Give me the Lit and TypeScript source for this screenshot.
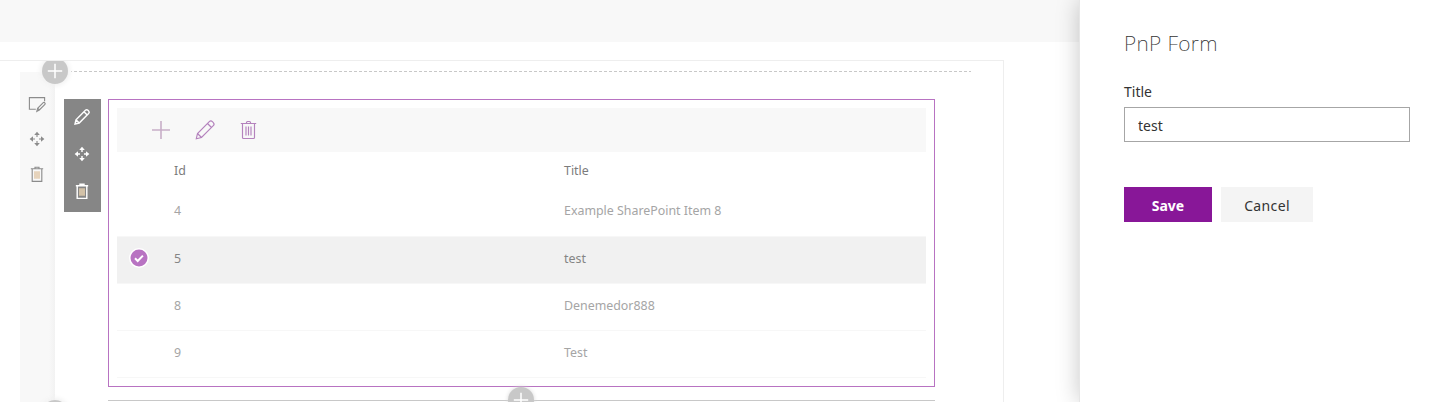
import { LitElement, html, css, svg } from "lit";
import { customElement, property } from "lit/decorators.js";

const glyphs: Record<string, unknown> = {
  add: svg`<path d="M10 1v18M1 10h18"/>`,
  edit: svg`<path d="M1.300 18.700l1.200-5.200L14.300 1.700a2.200 2.200 0 0 1 3.100 0l.9.9a2.200 2.200 0 0 1 0 3.100L6.500 17.500zM2.500 13.500l4 4M12.500 3.500l4 4"/>`,
  trash: svg`<path d="M2.800 3.500h15.400M4.500 3.500v14c0 .6.400 1 1 1h10c.6 0 1-.4 1-1v-14M8.500 3.500v-1c0-.6.400-1 1-1h2c.6 0 1 .4 1 1v1M8 6.500v9M10.500 6.500v9M13 6.500v9"/>`,
  bin: svg`<path d="M2.300 3.500h15.400M4 3.500v15.700h12V3.500M7.500 3.500V1.500h5v2"/><path class="bars" d="M7.500 6.500v9.500M10 6.500v9.500M12.500 6.500v9.500"/>`,
  move: svg`<path d="M10 7.500V3M10 12.500V17M7.500 10H3M12.500 10H17"/><path class="solid" d="M10 .8l3.500 4.200H6.500zM10 19.200l3.500-4.200H6.500zM.8 10l4.200-3.500v7zM19.200 10l-4.200-3.500v7z"/>`,
  section: svg`<path d="M8.500 16.500H.5V2h19v4.500M9.800 19.300l1-4 7-7c1.200-1.200 3.300 1 2.100 2.200l-7 7zM10.800 15.300l2.100 2.200"/>`,
};

@customElement("line-icon")
export class LineIcon extends LitElement {
  @property() name = "add";
  static styles = css`
    :host { display: block; width: 20px; height: 20px; }
    svg { display: block; width: 100%; height: 100%; overflow: visible; fill: none;
      stroke: currentColor; stroke-width: var(--stroke, 1.1); }
    .bars { stroke: var(--bars, currentColor); }
    .solid { fill: currentColor; stroke: none; }
  `;
  render() {
    return html`<svg viewBox="0 0 20 20">${glyphs[this.name]}</svg>`;
  }
}

@customElement("app-root")
export class AppRoot extends LitElement {
  private rows = [
    { id: "4", title: "Example SharePoint Item 8" },
    { id: "5", title: "test", selected: true },
    { id: "8", title: "Denemedor888" },
    { id: "9", title: "Test" },
  ];

  static styles = css`
    :host { display: flex; width: 1432px; height: 402px; overflow: hidden; background: #fff;
      font-family: "Noto Sans", "Open Sans", sans-serif; }
    * { box-sizing: border-box; }
    .page { width: 1079px; height: 402px; overflow: hidden; }
    .topbar { height: 42px; background: #f8f8f8; margin-bottom: 18px; }
    .canvas { position: relative; width: 1004px; height: 342px; overflow: hidden; display: flex;
      padding-left: 20px; border-top: 1px solid #eee; border-right: 1px solid #eee; }
    .rail { width: 35px; margin-top: 11px; padding: 24px 1px 0 0; display: flex; flex-direction: column;
      align-items: center; gap: 19px; color: #8c8c8c; flex: none; --bars: #d8b68c;
      background: linear-gradient(90deg, #f8f8f8 29px, #f2f2f2 35px); }
    .rail line-icon { width: 16px; height: 16px; --stroke: 1.4; }
    .rail line-icon[name="move"], .tools line-icon[name="move"] { width: 16px; height: 16px; }
    .tools { width: 37px; height: 113px; margin: 38px 7px 0 9px; padding: 10px 1px 0 0; flex: none;
      display: flex; flex-direction: column; align-items: center; gap: 21px; background: #868686; color: #fff;
      --bars: #f0d9b4; }
    .tools line-icon { width: 16px; height: 16px; --stroke: 1.8; }
    .content { width: 863px; display: flex; flex-direction: column; }
    .dash { height: 1px; margin: 10px 0 27px -37px; width: 900px; flex: none;
      background: repeating-linear-gradient(90deg, #c8c8c8 0 1px, transparent 1px 3px, #c8c8c8 3px 5px); }
    .part { width: 827px; height: 288px; border: 1px solid #b873c2; padding: 8px; flex: none; }
    .next { width: 827px; height: 1px; margin-top: 13px; background: #c8c8c8; flex: none; }
    .commands { height: 44px; background: #f8f8f8; display: flex; align-items: center;
      padding-left: 34px; gap: 24px; color: #b482bd; }
    .commands line-icon { --stroke: 1.15; }
    .commands line-icon[name="trash"] { margin-left: -1px; }
    .commands .plus { color: #c8aec8; --stroke: 1.6; }
    .row { height: 47px; display: grid; grid-template-columns: 57px 390px 1fr; padding-top: 13px;
      font-size: 12.4px; line-height: 18px; color: #a5a5a5; border-bottom: 1px solid #f7f7f7; }
    .head { height: 38px; padding-top: 10px; border: 0; color: #7c7c7c; }
    .row:nth-child(3) { padding-top: 12px; }
    .row.selected { background: #f1f1f1; background-clip: padding-box; color: #858585; }
    .check { display: block; width: 20px; height: 20px; margin: -2px 0 0 12px; }
    .knob { position: absolute; width: 26px; height: 26px; border-radius: 50%; background: #c8c8c8;
      color: #fff; padding: 5px; box-shadow: 0 0 5px 2px #f1f1f1; }
    .knob line-icon { width: 16px; height: 16px; --stroke: 1.9; }
    .knob.top { left: 42px; top: -3px; }
    .knob.bottom { left: 42px; top: 339px; }
    .knob.mid { left: 508px; top: 326px; box-shadow: 0 0 4px #d8d8d8; }
    .panel { position: relative; width: 353px; height: 402px; background: #fff; padding: 29px 22px 0 44px;
      border-left: 1px solid #e6e6e6; box-shadow: 0 0 22px rgba(0, 0, 0, .22); color: #333; }
    h1 { margin: 0 0 25px; font-size: 21px; line-height: 28px; font-weight: 200; color: #333; letter-spacing: .35px; }
    label { display: block; font-size: 14px; line-height: 20px; margin-bottom: 5px; }
    .field { height: 35px; width: 286px; border: 1px solid #a6a6a6; padding: 1px 0 0 13px;
      font: 14px/33px "Noto Sans", sans-serif; color: #333; display: block; outline: none; }
    .actions { display: flex; gap: 9px; margin-top: 45px; }
    button { height: 35px; border: 0; padding: 2px 0 0; font: 14px "Noto Sans", sans-serif; color: #333; }
    .save { width: 88px; background: #881798; color: #fff; font-weight: 700; }
    .cancel { width: 92px; background: #f4f4f4; font-weight: 400; letter-spacing: .35px; }
  `;

  render() {
    return html`
      <main class="page">
        <div class="topbar"></div>
        <section class="canvas">
          <div class="rail">
            <line-icon name="section"></line-icon>
            <line-icon name="move"></line-icon>
            <line-icon name="bin"></line-icon>
          </div>
          <div class="tools">
            <line-icon name="edit"></line-icon>
            <line-icon name="move"></line-icon>
            <line-icon name="bin"></line-icon>
          </div>
          <div class="content">
            <div class="dash"></div>
            <div class="part">
              <div class="commands">
                <line-icon class="plus" name="add"></line-icon>
                <line-icon name="edit"></line-icon>
                <line-icon name="trash"></line-icon>
              </div>
              <div class="row head"><span></span><span>Id</span><span>Title</span></div>
              ${this.rows.map((r) => html`
                <div class="row ${r.selected ? "selected" : ""}">
                  <span>${r.selected ? html`<svg class="check" viewBox="0 0 20 20">
                    <circle cx="10" cy="10" r="10" fill="#fff"/><circle cx="10" cy="10" r="8.500" fill="#b873c2"/>
                    <path d="M6 10.300l2.700 2.700 5.200-5.400" fill="none" stroke="#fff" stroke-width="2"/></svg>` : ""}</span>
                  <span>${r.id}</span><span>${r.title}</span>
                </div>`)}
            </div>
            <div class="next"></div>
          </div>
          <div class="knob top"><line-icon></line-icon></div>
          <div class="knob bottom"><line-icon></line-icon></div>
          <div class="knob mid"><line-icon></line-icon></div>
        </section>
      </main>
      <aside class="panel">
        <h1>PnP Form</h1>
        <label for="title">Title</label>
        <input class="field" id="title" .value=${"test"}>
        <div class="actions">
          <button class="save">Save</button>
          <button class="cancel">Cancel</button>
        </div>
      </aside>`;
  }
}
